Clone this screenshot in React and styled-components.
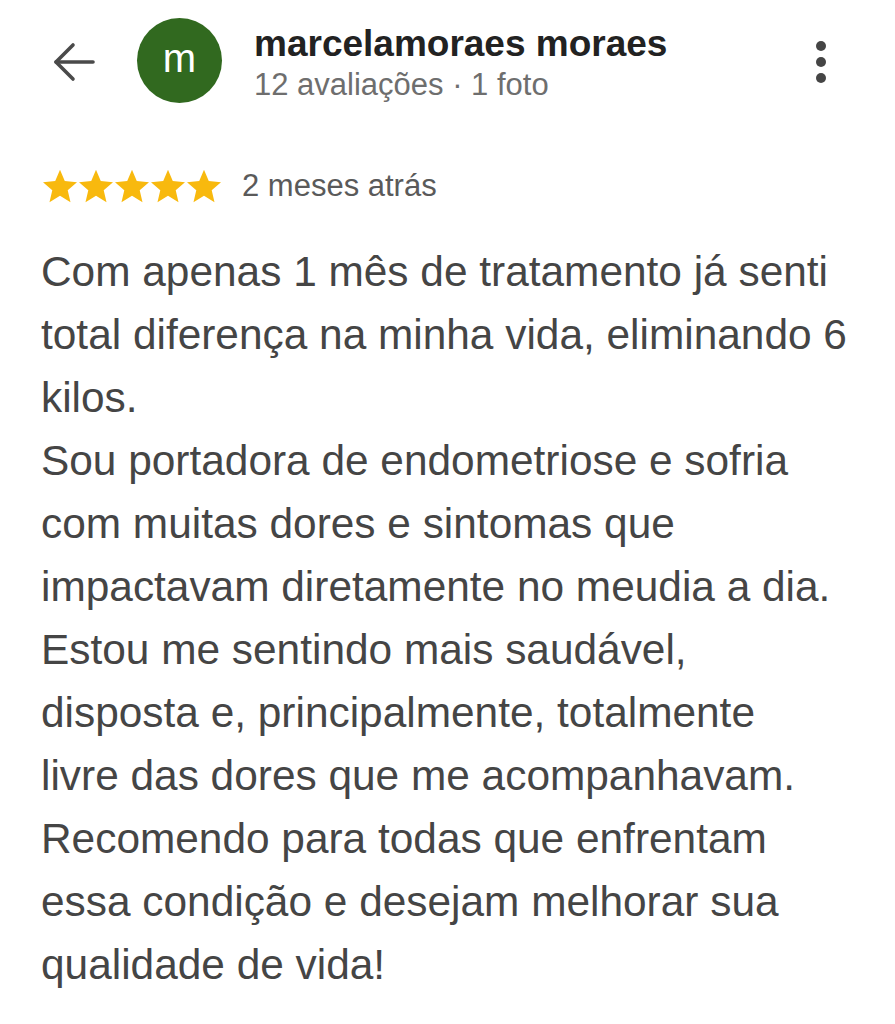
import React from 'react'
import styled, { createGlobalStyle } from 'styled-components'

const GlobalStyle = createGlobalStyle`
  body {
    margin: 0;
    background: #ffffff;
    font-family: "Liberation Sans", Arial, sans-serif;
  }
`;

const Page = styled.div`
  width: 895px;
  min-height: 1024px;
  background: #ffffff;
  overflow: hidden;
`;

const Header = styled.div`
  display: flex;
  align-items: center;
  padding: 18px 0 0 53px;
  height: 85px;
`;

const BackButton = styled.div`
  width: 42px;
  height: 42px;
  margin-top: 3px;
  color: #4a4a4a;
  display: flex;
`;

const Avatar = styled.div`
  width: 85px;
  height: 85px;
  border-radius: 50%;
  background: #31691f;
  color: #ffffff;
  display: flex;
  align-items: center;
  justify-content: center;
  font-size: 40px;
  line-height: 1;
  margin-left: 42px;
  padding-bottom: 6px;
  box-sizing: border-box;
  flex-shrink: 0;
`;

const Info = styled.div`
  display: flex;
  flex-direction: column;
  gap: 3px;
  margin-left: 32px;
  margin-top: 5px;
  flex: 1;
`;

const Name = styled.div`
  font-size: 37px;
  line-height: 40px;
  font-weight: 700;
  color: #222222;
`;

const Meta = styled.div`
  font-size: 31px;
  line-height: 36px;
  color: #6e6e6e;
`;

const Kebab = styled.div`
  display: flex;
  flex-direction: column;
  gap: 6px;
  margin-right: 69px;
  margin-top: 3px;
`;

const Dot = styled.span`
  width: 10px;
  height: 10px;
  border-radius: 50%;
  background: #454545;
`;

const RatingRow = styled.div`
  display: flex;
  align-items: center;
  padding-left: 43px;
  margin-top: 65px;
  height: 36px;
`;

const Stars = styled.div`
  display: flex;
  gap: 2px;
`;

const StarIcon = styled.svg`
  width: 34px;
  height: 34px;
  fill: #f8b90e;
`;

const When = styled.span`
  font-size: 31px;
  color: #5a5a5a;
  margin-left: 21px;
`;

const Body = styled.p`
  margin: 36px 0 0;
  padding-left: 41px;
  font-size: 42.4px;
  line-height: 63px;
  color: #454545;
  white-space: pre;
`;

const lines = [
  'Com apenas 1 mês de tratamento já senti',
  'total diferença na minha vida, eliminando 6',
  'kilos.',
  'Sou portadora de endometriose e sofria',
  'com muitas dores e sintomas que',
  'impactavam diretamente no meudia a dia.',
  'Estou me sentindo mais saudável,',
  'disposta e, principalmente, totalmente',
  'livre das dores que me acompanhavam.',
  'Recomendo para todas que enfrentam',
  'essa condição e desejam melhorar sua',
  'qualidade de vida!',
];

const Star = () => (
  <StarIcon viewBox="2 1.5 20 20">
    <path d="M12 17.27L18.18 21l-1.64-7.03L22 9.24l-7.19-.61L12 2 9.19 8.63 2 9.24l5.46 4.73L5.82 21z" />
  </StarIcon>
)

const App = () => {
  return (
    <Page>
      <GlobalStyle />
      <Header>
        <BackButton>
          <svg width="42" height="42" viewBox="0 0 42 42" fill="none" stroke="currentColor" strokeWidth="3.6" strokeLinecap="round" strokeLinejoin="round">
            <path d="M40 21H3" />
            <path d="M20 4L3 21l17 17" />
          </svg>
        </BackButton>
        <Avatar>m</Avatar>
        <Info>
          <Name>marcelamoraes moraes</Name>
          <Meta>12 avaliações · 1 foto</Meta>
        </Info>
        <Kebab>
          <Dot />
          <Dot />
          <Dot />
        </Kebab>
      </Header>
      <RatingRow>
        <Stars>
          {[0, 1, 2, 3, 4].map(i => <Star key={i} />)}
        </Stars>
        <When>2 meses atrás</When>
      </RatingRow>
      <Body>{lines.join('\n')}</Body>
    </Page>
  )
}

export default App
